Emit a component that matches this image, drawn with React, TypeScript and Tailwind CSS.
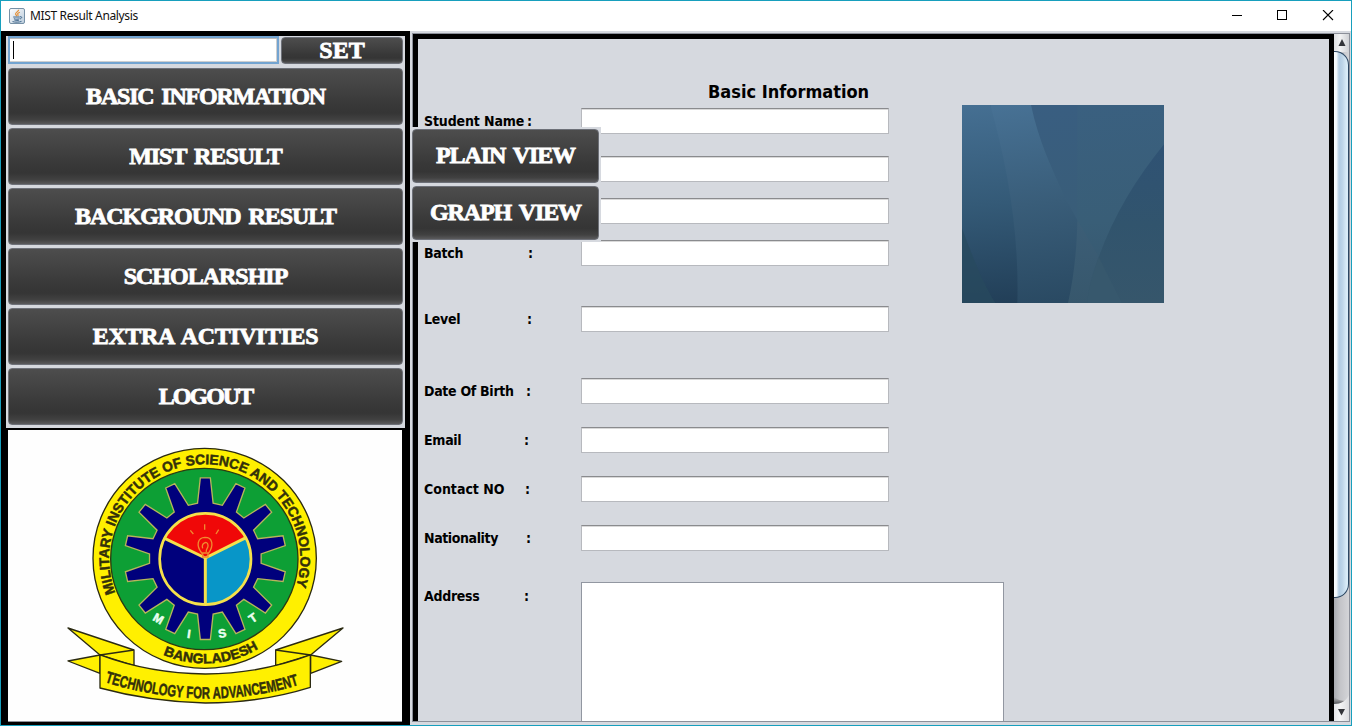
import React from "react";

const BUTTON =
  "flex items-center justify-center rounded-[4px] border border-[#6d7078] bg-[linear-gradient(#4d4d4d_0%,#424242_35%,#383838_65%,#353535_80%,#414141_92%,#5a5a5c_100%)] pb-[2px] whitespace-nowrap font-['Liberation_Serif',serif] text-[24px] leading-6 font-bold text-white [-webkit-text-stroke:0.8px_white]";

const FIELD =
  "h-[26px] w-[308px] shrink-0 border border-[#b7b9be] border-t-[#8a8b8e] bg-white shadow-[inset_0_1px_0_#d9d9d9]";

const LABEL =
  "font-['DejaVu_Sans_Condensed','DejaVu_Sans',sans-serif] text-[14px] leading-[18px] font-bold whitespace-nowrap text-black [font-stretch:condensed]";

const MENU = [
  { text: "BASIC INFORMATION", tracking: "tracking-[-1.2px] [word-spacing:3px]" },
  { text: "MIST RESULT", tracking: "tracking-[-1px] [word-spacing:3px]" },
  { text: "BACKGROUND RESULT", tracking: "tracking-[-1.05px] [word-spacing:3px]" },
  { text: "SCHOLARSHIP", tracking: "tracking-[-1px]" },
  { text: "EXTRA ACTIVITIES", tracking: "tracking-[-0.4px] [word-spacing:3px]" },
  { text: "LOGOUT", tracking: "tracking-[-2px]" },
];

function JavaIcon() {
  return (
    <svg width="16" height="16" viewBox="0 0 16 16" fill="none">
      <defs>
        <linearGradient id="tile" x1="0" y1="0" x2="1" y2="1">
          <stop offset="0" stopColor="#ffffff" />
          <stop offset="1" stopColor="#b9cbdb" />
        </linearGradient>
      </defs>
      <rect x="0.5" y="0.5" width="15" height="15" rx="1.5" fill="url(#tile)" stroke="#7690a6" />
      <path d="M9.6 1.8C9.8 3.6 6.2 4.3 6.6 6c.2.9 1 1.2.9 2.2M10.8 4.2c-2 .9-2.6 1.6-1.9 2.5.4.5.2 1-.2 1.4" stroke="#e58b2c" strokeWidth="1.1" />
      <path d="M4.2 9h6.6M4.9 10.7c1.7.7 4.2.6 5.6 0M5.4 12.1c1.4.5 3.4.5 4.6 0M11 8.8c2-.7 2.6 1.3 0 2.2M3.5 13.6c2.7.8 6.7.7 9-.2" stroke="#41688d" strokeWidth="1" />
    </svg>
  );
}

function gearPath(cx: number, cy: number) {
  const teeth = 14;
  const points: string[] = [];
  const push = (radius: number, angle: number) =>
    points.push(`${(cx + radius * Math.sin(angle)).toFixed(1)} ${(cy - radius * Math.cos(angle)).toFixed(1)}`);
  for (let i = 0; i < teeth; i++) {
    const a = (i * 2 * Math.PI) / teeth;
    push(168, a - 0.14);
    push(243, a - 0.062);
    push(243, a + 0.062);
    push(168, a + 0.14);
  }
  return `M${points.join("L")}Z`;
}

function Crest() {
  const sans = "'Liberation Sans', sans-serif";
  return (
    <svg className="block" width="394" height="291" viewBox="8 430 394 291">
      <g transform="translate(60 435) scale(0.33333)">
        <defs>
          <path id="ring" d="M168 477A287 283 0 1 1 700 477" />
          <path id="base" d="M300 655A314 314 0 0 0 608 633" />
          <path id="motto" d="M133 741Q436 836 722 748" />
        </defs>
        <ellipse cx="434" cy="370" rx="335" ry="330" fill="#fff000" stroke="#2b2a12" strokeWidth="4" />
        <ellipse cx="433" cy="372" rx="281" ry="272" fill="#0d9f35" stroke="#2b3a12" strokeWidth="4" />
        <path d={gearPath(436, 371)} fill="#00007c" stroke="#b7b55a" strokeWidth="4" />
        <circle cx="436" cy="372" r="137" fill="#00007c" />
        <path d="M436 371L557 307A137 137 0 0 1 436 509Z" fill="#0896c8" />
        <path d="M436 367L314 309A137 137 0 0 1 558 307Z" fill="#f00808" />
        <path d="M436 509V369M436 369L314 310M436 369L558 308" fill="none" stroke="#f5e04b" strokeWidth="9" />
        <circle cx="436" cy="372" r="137" fill="none" stroke="#f5e04b" strokeWidth="8" />
        <g fill="none" stroke="#f08a30" strokeWidth="4">
          <path d="M425 354c-18-24-12-46 10-47 23 0 27 24 11 47zM428 355v11h16v-11M428 340c-5-16 15-25 16-9 1 9-7 10-5 20M434 268v16M391 286l9 11M476 284l-8 13" />
        </g>
        <g fill="#e9fff0" stroke="#e9fff0" strokeWidth="1.5" fontFamily={sans} fontWeight="bold" fontSize="36" textAnchor="middle">
          <text transform="translate(289 562) rotate(30)">M</text>
          <text transform="translate(385 609) rotate(8)">I</text>
          <text transform="translate(489 607) rotate(-10)">S</text>
          <text transform="translate(586 559) rotate(-35)">T</text>
        </g>
        <g fill="#33300a" stroke="#33300a" strokeWidth="1.5" fontFamily={sans} fontWeight="bold">
          <text fontSize="42">
            <textPath href="#ring" startOffset="4" textLength="1085" lengthAdjust="spacingAndGlyphs">
              MILITARY INSTITUTE OF SCIENCE AND TECHNOLOGY
            </textPath>
          </text>
          <text fontSize="41">
            <textPath href="#base" startOffset="10" textLength="298" lengthAdjust="spacingAndGlyphs">
              BANGLADESH
            </textPath>
          </text>
        </g>
        <g fill="#fff000" stroke="#2b2a12" strokeWidth="4" strokeLinejoin="round">
          <path d="M120 660L24 678L120 715Z" />
          <path d="M752 660L845 679L752 715Z" />
          <path d="M24 579L222 645V692L120 660Z" />
          <path d="M849 579L647 645V692L752 660Z" />
          <path d="M120 660L222 645M752 660L647 645" />
          <path d="M120 660Q270 716 436 717Q602 716 751 660V757Q600 804 436 804Q270 800 120 759Z" />
        </g>
        <text fill="#33300a" stroke="#33300a" strokeWidth="1.5" fontFamily={sans} fontWeight="bold" fontSize="49">
          <textPath href="#motto" startOffset="1" textLength="592" lengthAdjust="spacingAndGlyphs">
            TECHNOLOGY FOR ADVANCEMENT
          </textPath>
        </text>
      </g>
    </svg>
  );
}

function Portrait() {
  return (
    <svg className="mt-[66px] ml-[73px] block shrink-0" width="202" height="198" viewBox="0 0 606 594" preserveAspectRatio="none">
      <defs>
        <linearGradient id="sky" x1="0.5" y1="0" x2="0.6" y2="1">
          <stop offset="0" stopColor="#3a6080" />
          <stop offset="0.6" stopColor="#395e77" />
          <stop offset="1" stopColor="#36566c" />
        </linearGradient>
        <linearGradient id="dusk" gradientUnits="userSpaceOnUse" x1="230" y1="0" x2="290" y2="345">
          <stop offset="0" stopColor="#395e81" />
          <stop offset="1" stopColor="#395d78" />
        </linearGradient>
        <linearGradient id="leaf" gradientUnits="userSpaceOnUse" x1="60" y1="0" x2="110" y2="594">
          <stop offset="0" stopColor="#456f92" />
          <stop offset="0.5" stopColor="#345a77" />
          <stop offset="1" stopColor="#223f58" />
        </linearGradient>
        <linearGradient id="blade" gradientUnits="userSpaceOnUse" x1="160" y1="0" x2="240" y2="594">
          <stop offset="0" stopColor="#477194" />
          <stop offset="0.5" stopColor="#395d79" />
          <stop offset="1" stopColor="#2a4a63" />
        </linearGradient>
        <linearGradient id="hill" x1="0" y1="0" x2="0" y2="1">
          <stop offset="0" stopColor="#2f5274" />
          <stop offset="0.5" stopColor="#31546d" />
          <stop offset="1" stopColor="#36566b" />
        </linearGradient>
        <linearGradient id="wedge" x1="0" y1="0" x2="0" y2="1">
          <stop offset="0" stopColor="#3c5e77" />
          <stop offset="1" stopColor="#37576c" />
        </linearGradient>
      </defs>
      <rect width="606" height="594" fill="url(#sky)" />
      <path d="M207 0C230 110 270 190 310 280L346 345V0Z" fill="url(#dusk)" />
      <path d="M606 118C490 260 400 430 375 594H606Z" fill="url(#hill)" />
      <path d="M346 345L410 455C390 510 380 550 375 594H318Z" fill="url(#wedge)" />
      <path d="M410 455L480 594H375C380 550 390 510 410 455Z" fill="#37586d" />
      <path d="M85 0H207C230 110 270 190 310 280L346 345C345 430 335 520 318 594H160Z" fill="url(#blade)" />
      <path d="M0 0H85C135 180 172 380 166 594H0Z" fill="url(#leaf)" />
      <path d="M0 370C30 450 60 530 100 594H0Z" fill="#284a5e" opacity="0.7" />
    </svg>
  );
}

type RowProps = { label?: string; labelWidth?: string; tracking?: string; gap: string };

function Row({ label, labelWidth = "", tracking = "tracking-[-0.3px]", gap }: RowProps) {
  return (
    <div className={`flex h-[26px] items-center ${gap}`}>
      <div className="flex w-[163px] shrink-0 items-center pl-[6px]">
        {label && (
          <>
            <span className={`${LABEL} ${labelWidth} ${tracking}`}>{label}</span>
            <span className={LABEL}>:</span>
          </>
        )}
      </div>
      <div className={FIELD} />
    </div>
  );
}

function Scrollbar() {
  return (
    <div className="flex w-[15px] shrink-0 flex-col bg-[linear-gradient(90deg,#a9abb1,#c3c4c8_40%,#d4d5d8)]">
      <div className="h-[18px] bg-[linear-gradient(90deg,#dfe0e3,#f2f3f4_40%,#cfd1d5)]">
        <svg width="15" height="18" viewBox="0 0 15 18">
          <path d="M8 5L11.5 12H4.5Z" fill="#33353a" />
        </svg>
      </div>
      <div className="-mt-px h-[547px] rounded-r-[14px] border border-l-0 border-[#2b4763] bg-[linear-gradient(90deg,#fafdff_0%,#eff6fb_18%,#b0cbe2_36%,#bdd5e8_60%,#d9ecf7_90%)]" />
      <div className="flex-1" />
      <svg className="block" width="15" height="31" viewBox="0 0 15 31">
        <defs>
          <linearGradient id="shade" x1="0" y1="0" x2="0" y2="1">
            <stop offset="0" stopColor="#777" stopOpacity="0" />
            <stop offset="1" stopColor="#4c4e52" />
          </linearGradient>
          <linearGradient id="down" x1="0" y1="0" x2="1" y2="0">
            <stop offset="0" stopColor="#e4e5e8" />
            <stop offset="0.4" stopColor="#f4f5f6" />
            <stop offset="1" stopColor="#dcdde0" />
          </linearGradient>
        </defs>
        <path d="M0 7C4 10 8 11 12 11L8 14H0Z" fill="url(#shade)" />
        <path d="M0 14C7 14 12 11 15 5V31H0Z" fill="url(#down)" />
        <path d="M4 19H11L7.5 25.5Z" fill="#33353a" />
      </svg>
    </div>
  );
}

export default function App() {
  return (
    <div className="flex h-[726px] w-[1352px] flex-col overflow-hidden border border-[#179fbd] bg-white">
      <header className="flex h-[30px] shrink-0 items-center bg-white pl-2">
        <JavaIcon />
        <span className="ml-[5px] font-['Noto_Sans',sans-serif] text-[12px] tracking-[-0.35px] text-[#111]">MIST Result Analysis</span>
        <svg className="mr-[17px] ml-auto block" width="102" height="12" viewBox="0 0 102 12" fill="none" stroke="#000" shapeRendering="crispEdges">
          <path d="M0 5.5H10" />
          <rect x="45.5" y="0.5" width="9" height="9" />
          <path d="M91 0L101 10M101 0L91 10" shapeRendering="auto" strokeWidth="1.1" />
        </svg>
      </header>

      <div className="flex min-h-0 flex-1">
        <aside className="flex w-[409px] shrink-0 flex-col bg-black pt-[5px] pl-[5px]">
          <div className="flex h-[392px] w-[399px] shrink-0 flex-col bg-[#d6d9df] px-[2px]">
            <div className="flex h-[28px] items-start gap-[2px]">
              <div className="flex h-[28px] w-[271px] items-center border-2 border-[#73a4d1] bg-white pl-[3px] shadow-[inset_0_1px_0_#b9b9b9,inset_0_-1px_0_#cfcfcf,inset_-1px_0_0_#cfcfcf]">
                <div className="h-[18px] w-px bg-black" />
              </div>
              <button className={`${BUTTON} mt-px h-[27px] w-[122px]`}>SET</button>
            </div>
            <nav className="mt-[4px] flex flex-col gap-[3px]">
              {MENU.map((item) => (
                <button key={item.text} className={`${BUTTON} ${item.tracking} h-[57px] w-[395px]`}>
                  {item.text}
                </button>
              ))}
            </nav>
          </div>
          <div className="mt-[2px] ml-[2px] h-[292px] w-[394px] border-b border-[#8f929b] bg-[#fefefe]">
            <Crest />
          </div>
        </aside>

        <main className="relative flex min-w-0 flex-1 bg-[#d6d9df] pt-[2px] pr-px pb-[3px] pl-[2px]">
          <div className="flex min-w-0 flex-1 border border-[#8b8f99]">
            <section className="min-w-0 flex-1 overflow-hidden border-x-[5px] border-t-[5px] border-black">
              <div className="flex items-start">
                <div className="w-[471px] shrink-0">
                  <h1 className="h-[69px] pt-[42px] pl-[290px] font-['DejaVu_Sans_Condensed','DejaVu_Sans',sans-serif] text-[18px] leading-[22px] font-bold whitespace-nowrap [font-stretch:condensed]">
                    Basic Information
                  </h1>
                  <Row label="Student Name" labelWidth="w-[103px]" tracking="tracking-[-0.12px]" gap="" />
                  <Row gap="mt-[22px]" />
                  <Row gap="mt-[16px]" />
                  <Row label="Batch" labelWidth="w-[104px]" gap="mt-[16px]" />
                  <Row label="Level" labelWidth="w-[103px]" gap="mt-[40px]" />
                </div>
                <Portrait />
              </div>
              <Row label="Date Of Birth" labelWidth="w-[102px]" gap="mt-[46px]" />
              <Row label="Email" labelWidth="w-[100px]" gap="mt-[23px]" />
              <Row label="Contact NO" labelWidth="w-[101px]" tracking="tracking-[0px]" gap="mt-[23px]" />
              <Row label="Nationality" labelWidth="w-[102px]" tracking="tracking-[-0.4px]" gap="mt-[23px]" />
              <div className="mt-[31px] flex items-start">
                <div className="flex w-[163px] shrink-0 pt-[5px] pl-[6px]">
                  <span className={`${LABEL} w-[100px] tracking-[-0.3px]`}>Address</span>
                  <span className={LABEL}>:</span>
                </div>
                <div className="h-[180px] w-[423px] shrink-0 border border-[#9297a1] bg-white" />
              </div>
            </section>
            <Scrollbar />
          </div>

          <div className="absolute top-[96px] left-[1px] flex h-[115px] w-[190px] flex-col gap-[3px] bg-[#d6d9df] pt-[2px] pl-px">
            <button className={`${BUTTON} h-[54px] w-[187px] tracking-[-1.1px] [word-spacing:3px]`}>PLAIN VIEW</button>
            <button className={`${BUTTON} h-[54px] w-[187px] tracking-[-1.1px] [word-spacing:3px]`}>GRAPH VIEW</button>
          </div>
        </main>
      </div>
    </div>
  );
}
